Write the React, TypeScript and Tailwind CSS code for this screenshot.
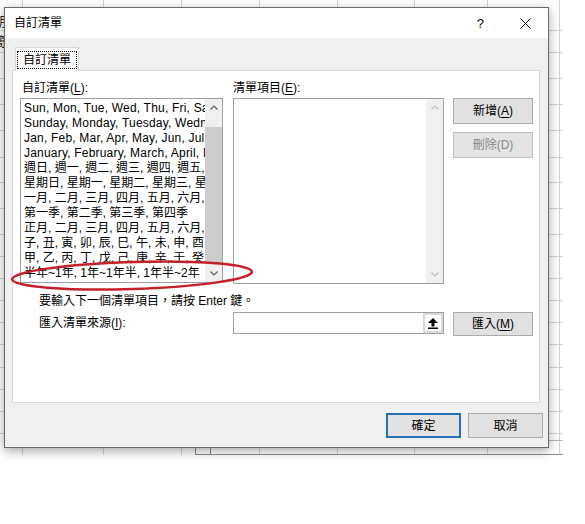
import type { ReactNode } from 'react'

const listItems = [
  'Sun, Mon, Tue, Wed, Thu, Fri, Sat',
  'Sunday, Monday, Tuesday, Wednesday, Thursday, Friday, Saturday',
  'Jan, Feb, Mar, Apr, May, Jun, Jul, Aug, Sep, Oct, Nov, Dec',
  'January, February, March, April, May, June, July, August, September, October, November, December',
  '週日, 週一, 週二, 週三, 週四, 週五, 週六',
  '星期日, 星期一, 星期二, 星期三, 星期四, 星期五, 星期六',
  '一月, 二月, 三月, 四月, 五月, 六月, 七月, 八月, 九月, 十月, 十一月, 十二月',
  '第一季, 第二季, 第三季, 第四季',
  '正月, 二月, 三月, 四月, 五月, 六月, 七月, 八月, 九月, 十月, 十一月, 臘月',
  '子, 丑, 寅, 卯, 辰, 巳, 午, 未, 申, 酉, 戌, 亥',
  '甲, 乙, 丙, 丁, 戊, 己, 庚, 辛, 壬, 癸',
  '半年~1年, 1年~1年半, 1年半~2年',
]

const sheetRows = [30, 52, 78, 104, 130, 157, 182, 208, 234, 256, 278, 300, 322, 344, 367, 389, 411, 433]
const sheetCols = [22, 103, 181, 259, 337, 414, 487, 559]

function SheetBackground() {
  return (
    <svg className="absolute left-0 top-0" width={585} height={524}>
      <rect x={0} y={0} width={563} height={455} fill="#ffffff" />
      {sheetRows.map((y) => (
        <line key={y} x1={0} x2={563} y1={y + 0.5} y2={y + 0.5} stroke="#d4d4d4" />
      ))}
      {sheetCols.map((x) => (
        <line key={x} x1={x + 0.5} x2={x + 0.5} y1={0} y2={455} stroke="#d4d4d4" />
      ))}
      <line x1={548} x2={563} y1={440.5} y2={440.5} stroke="#b8b8b8" />
      <line x1={195} x2={563} y1={454.5} y2={454.5} stroke="#8c8c8c" />
      <line x1={195.5} x2={195.5} y1={447} y2={455} stroke="#8c8c8c" />
      <line x1={210.5} x2={210.5} y1={447} y2={455} stroke="#8c8c8c" />
      <text x={-7} y={26} fontSize={13} fill="#222" fontFamily="Noto Sans CJK TC">期</text>
      <text x={-7} y={46} fontSize={13} fill="#222" fontFamily="Noto Sans CJK TC">簡</text>
    </svg>
  )
}

function Chevron({ up, color }: { up?: boolean; color: string }) {
  return (
    <svg width={8} height={5} viewBox="0 0 8 5">
      <polyline
        points={up ? '0.5,4.5 4,1 7.5,4.5' : '0.5,0.5 4,4 7.5,0.5'}
        fill="none"
        stroke={color}
        strokeWidth={1.2}
      />
    </svg>
  )
}

function ScrollBar({ thumb }: { thumb?: boolean }) {
  const arrow = thumb ? '#606060' : '#c2c2c2'
  return (
    <div className="flex w-[17px] flex-col bg-[#f0f0f0]">
      <div className="flex h-[17px] items-center justify-center">
        <Chevron up color={arrow} />
      </div>
      <div className="flex flex-1 flex-col pb-[1px] pt-[11px]">
        {thumb && <div className="flex-1 bg-[#cdcdcd]" />}
      </div>
      <div className="flex h-[17px] items-center justify-center">
        <Chevron color={arrow} />
      </div>
    </div>
  )
}

function Key({ children }: { children: ReactNode }) {
  return <span className="underline underline-offset-2">{children}</span>
}

function WinButton({
  children,
  disabled,
  primary,
  className = '',
}: {
  children: ReactNode
  disabled?: boolean
  primary?: boolean
  className?: string
}) {
  const tone = disabled
    ? 'border-[#bfbfbf] bg-[#e3e3e3] text-[#8a8a8a]'
    : primary
      ? 'border-2 border-[#2470b3] bg-[#e1e1e1] text-black'
      : 'border-[#adadad] bg-[#e1e1e1] text-black'
  return (
    <div className={`flex items-center justify-center border text-[12px] ${tone} ${className}`}>
      {children}
    </div>
  )
}

function UploadIcon() {
  return (
    <svg width={10} height={11} viewBox="0 0 10 11">
      <polygon points="5,0 10,5 6.5,5 6.5,8.5 3.5,8.5 3.5,5 0,5" fill="#000" />
      <rect x={0} y={9.5} width={10} height={1.5} fill="#000" />
    </svg>
  )
}

export default function App() {
  return (
    <div className="relative h-[524px] w-[585px] overflow-hidden bg-white font-['Liberation_Sans','Noto_Sans_CJK_TC',sans-serif] text-[12px] text-black">
      <SheetBackground />

      <div className="absolute left-[4px] top-[7px] flex h-[441px] w-[545px] flex-col border border-[#6a6a6a] bg-[#f0f0f0] shadow-[0_3px_10px_rgba(0,0,0,0.35)]">
        {/* title bar */}
        <div className="flex h-[30px] items-center bg-white pl-[9px]">
          <span className="text-[12px]">自訂清單</span>
          <span className="ml-auto mr-[36px] text-[13px] leading-none">?</span>
          <svg width={11} height={11} viewBox="0 0 11 11" className="mr-[17px]">
            <path d="M0.5 0.5 L10.5 10.5 M10.5 0.5 L0.5 10.5" stroke="#000" strokeWidth={1} />
          </svg>
        </div>

        {/* body */}
        <div className="flex flex-1 flex-col pl-[7px] pt-[9px]">
          <div className="relative z-10 -mb-px ml-[3px] flex h-[24px] w-[64px] items-center justify-center border border-b-0 border-[#d9d9d9] bg-white">
            <div className="flex h-[18px] w-[60px] items-center justify-center border border-dotted border-black">
              自訂清單
            </div>
          </div>

          <div className="h-[333px] w-[528px] border border-[#d9d9d9] bg-white pl-[7px] pt-[10px]">
            <div className="flex">
              <div className="w-[203px]">
                <div className="h-[17px] pl-[2px] leading-[15px]">
                  自訂清單(<Key>L</Key>):
                </div>
                <div className="flex h-[185px] border border-[#a0a0a0] bg-white">
                  <div className="flex-1 overflow-hidden pl-[3px] pt-[2px]">
                    {listItems.map((item, i) => (
                      <div
                        key={item}
                        className={`h-[15px] whitespace-nowrap leading-[15px] ${i < 4 ? 'tracking-[0.2px]' : ''}`}
                      >
                        {item}
                      </div>
                    ))}
                  </div>
                  <ScrollBar thumb />
                </div>
              </div>

              <div className="ml-[10px] w-[211px]">
                <div className="h-[17px] leading-[15px]">
                  清單項目(<Key>E</Key>):
                </div>
                <div className="flex h-[186px] border border-[#a0a0a0] bg-white">
                  <div className="flex-1" />
                  <ScrollBar />
                </div>
              </div>

              <div className="ml-[9px] flex w-[80px] flex-col gap-[8px] pt-[17px]">
                <WinButton className="h-[26px]">
                  新增(<Key>A</Key>)
                </WinButton>
                <WinButton disabled className="h-[26px]">
                  刪除(D)
                </WinButton>
              </div>
            </div>

            <div className="ml-[19px] mt-[9px] leading-[16px]">要輸入下一個清單項目，請按 Enter 鍵。</div>

            <div className="mt-[3px] flex items-start">
              <div className="ml-[19px] w-[194px] leading-[22px]">
                匯入清單來源(<Key>I</Key>):
              </div>
              <div className="flex h-[22px] w-[211px] border border-[#a0a0a0] bg-white">
                <div className="flex-1" />
                <div className="flex w-[20px] bg-[#d9d9d9] p-[2px]">
                  <div className="flex flex-1 items-center justify-center bg-white">
                    <UploadIcon />
                  </div>
                </div>
              </div>
              <WinButton className="ml-[9px] h-[24px] w-[80px]">
                匯入(<Key>M</Key>)
              </WinButton>
            </div>
          </div>

          <div className="mt-[10px] flex justify-end gap-[7px] pr-[5px]">
            <WinButton primary className="h-[25px] w-[75px]">
              確定
            </WinButton>
            <WinButton className="h-[25px] w-[75px]">取消</WinButton>
          </div>
        </div>
      </div>

      <svg className="pointer-events-none absolute left-0 top-0" width={585} height={524}>
        <ellipse
          cx={132}
          cy={275.5}
          rx={120}
          ry={13.5}
          transform="rotate(-1.8 132 275.5)"
          fill="none"
          stroke="#c3202b"
          strokeWidth={2.5}
        />
      </svg>
    </div>
  )
}
